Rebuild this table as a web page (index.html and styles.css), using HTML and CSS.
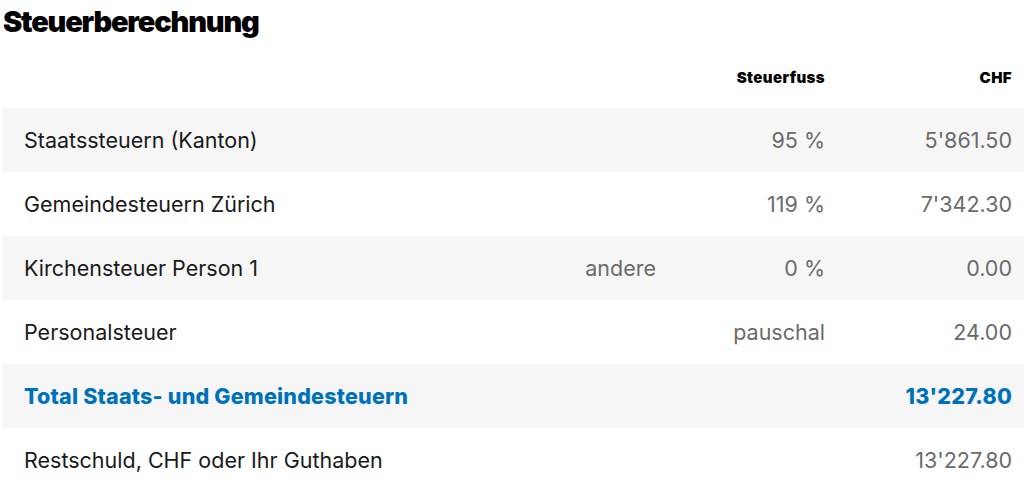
FILE: index.html
```html
<!DOCTYPE html>
<html lang="de">
<head>
<meta charset="utf-8">
<title>Steuerberechnung</title>
<link rel="stylesheet" href="styles.css">
</head>
<body>
<div class="page">
  <h1 class="title">Steuerberechnung</h1>
  <table class="tax">
    <colgroup>
      <col class="c-label">
      <col class="c-extra">
      <col class="c-rate">
      <col class="c-amount">
    </colgroup>
    <thead>
      <tr class="head">
        <th></th>
        <th></th>
        <th class="num">Steuerfuss</th>
        <th class="num">CHF</th>
      </tr>
    </thead>
    <tbody>
      <tr class="alt">
        <td class="label">Staatssteuern (Kanton)</td>
        <td class="num muted"></td>
        <td class="num muted">95 %</td>
        <td class="num muted">5'861.50</td>
      </tr>
      <tr>
        <td class="label">Gemeindesteuern Zürich</td>
        <td class="num muted"></td>
        <td class="num muted">119 %</td>
        <td class="num muted">7'342.30</td>
      </tr>
      <tr class="alt">
        <td class="label">Kirchensteuer Person 1</td>
        <td class="num muted">andere</td>
        <td class="num muted">0 %</td>
        <td class="num muted">0.00</td>
      </tr>
      <tr>
        <td class="label">Personalsteuer</td>
        <td class="num muted"></td>
        <td class="num muted">pauschal</td>
        <td class="num muted">24.00</td>
      </tr>
      <tr class="alt total">
        <td class="label">Total Staats- und Gemeindesteuern</td>
        <td class="num"></td>
        <td class="num"></td>
        <td class="num">13'227.80</td>
      </tr>
      <tr>
        <td class="label">Restschuld, CHF oder Ihr Guthaben</td>
        <td class="num muted"></td>
        <td class="num muted"></td>
        <td class="num muted">13'227.80</td>
      </tr>
    </tbody>
  </table>
</div>
</body>
</html>
```
FILE: styles.css
```css
html, body {
  margin: 0;
  padding: 0;
  background: #ffffff;
}
body {
  font-family: Inter, "Noto Sans", "Liberation Sans", sans-serif;
  color: #1a1a1a;
  overflow: hidden;
}
.page {
  padding: 4px 0 0 3px;
}
.title {
  margin: 0;
  font-size: 29px;
  font-weight: 900;
  line-height: 36px;
  color: #000;
  letter-spacing: -1.2px;
}
.tax {
  width: 1021px;
  border-collapse: collapse;
  table-layout: fixed;
}
.c-label { width: 557px; }
.c-extra { width: 108px; }
.c-rate { width: 169px; }
.c-amount { width: 187px; }
.head th {
  height: 62px;
  padding: 6px 12px 0 0;
  font-size: 15px;
  font-weight: 900;
  letter-spacing: 0.4px;
  color: #000;
  vertical-align: middle;
}
.tax td {
  height: 64px;
  padding: 0 12px 0 21px;
  font-size: 21.5px;
  vertical-align: middle;
  white-space: nowrap;
}
.tax td.num {
  padding-left: 0;
}
.num { text-align: right; }
.alt td { background: #f6f6f6; }
.muted { color: #6b6b6b; }
.total td {
  color: #0071bb;
  font-weight: 800;
  letter-spacing: 0.2px;
}
```
